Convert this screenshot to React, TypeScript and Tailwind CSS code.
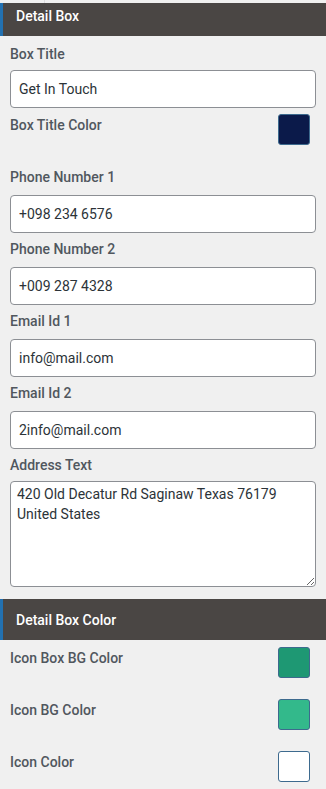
import React from "react";

const font = { fontFamily: "Roboto, 'Noto Sans', Arial, sans-serif" };

function Field({ label, value, first }: { label: string; value: string; first?: boolean }) {
  return (
    <div className="flex flex-col">
      <div className={`h-[20px] leading-[20px] text-[14px] font-medium text-[#50575e] ${first ? "mb-[6px]" : "mb-[8px]"}`}>{label}</div>
      <input
        readOnly
        defaultValue={value}
        className="h-[38px] w-full rounded-[4px] border border-[#8c8f94] bg-white px-[8px] text-[14px] text-[#2c3338] outline-none"
        style={font}
      />
    </div>
  );
}

function ColorRow({ label, color }: { label: string; color: string }) {
  return (
    <div className="flex h-[30px] items-start justify-between">
      <div className="mt-[1px] h-[20px] leading-[20px] text-[14px] font-medium text-[#50575e]">{label}</div>
      <div className="mr-[6px] h-[31px] w-[32px] rounded-[3px] border border-[#3d6a8e]" style={{ backgroundColor: color }} />
    </div>
  );
}

export default function App() {
  return (
    <div className="w-[326px] h-[789px] overflow-hidden bg-[#f0f0f0]" style={font}>
      <div className="flex h-[3px]">
        <div className="w-[45px] border-r border-[#dcdcde]" />
      </div>
      <div className="flex h-[33px] items-start border-l-[3px] border-[#2271b1] bg-[#4a4644] pl-[13px] pt-[3px] text-[14px] font-medium leading-[20px] text-white">
        Detail Box
      </div>
      <div className="flex flex-col px-[10px]">
        <div className="mt-[8px]">
          <Field label="Box Title" value="Get In Touch" first />
        </div>
        <div className="mt-[6px]">
          <ColorRow label="Box Title Color" color="#0b1a4a" />
        </div>
        <div className="mt-[23px]">
          <Field label="Phone Number 1" value="+098 234 6576" />
        </div>
        <div className="mt-[6px]">
          <Field label="Phone Number 2" value="+009 287 4328" />
        </div>
        <div className="mt-[6px]">
          <Field label="Email Id 1" value="info@mail.com" />
        </div>
        <div className="mt-[6px]">
          <Field label="Email Id 2" value="2info@mail.com" />
        </div>
        <div className="mt-[6px] flex flex-col">
          <div className="mb-[6px] h-[20px] leading-[20px] text-[14px] font-medium text-[#50575e]">Address Text</div>
          <textarea
            readOnly
            defaultValue={"420 Old Decatur Rd Saginaw Texas 76179 United States"}
            className="h-[106px] w-full rounded-[4px] border border-[#8c8f94] bg-white px-[6px] py-[2px] text-[14px] leading-[20px] text-[#2c3338] outline-none"
            style={{ ...font, resize: "both" }}
          />
        </div>
      </div>
      <div className="mt-[12px] flex h-[41px] items-center border-l-[3px] border-[#2271b1] bg-[#4a4644] pl-[13px] text-[14px] font-medium leading-[20px] text-white">
        Detail Box Color
      </div>
      <div className="flex flex-col gap-[22px] px-[10px] pt-[7px]">
        <ColorRow label="Icon Box BG Color" color="#1e9873" />
        <ColorRow label="Icon BG Color" color="#33b98b" />
        <ColorRow label="Icon Color" color="#ffffff" />
      </div>
    </div>
  );
}
